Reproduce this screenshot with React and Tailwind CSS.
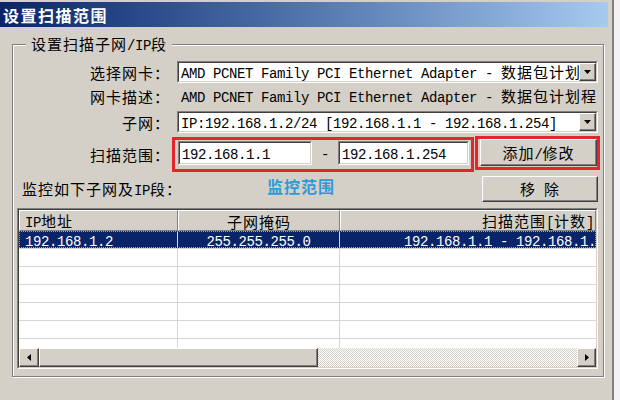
import React from "react";

const LAT = "font-['Liberation_Mono',monospace] text-[14px] tracking-[-0.4px]";
const CJK = "font-['Noto_Sans_CJK_SC',sans-serif] text-[15px] tracking-[1px]";

function T({ s, bold }) {
  const runs = [];
  for (const ch of s) {
    const a = ch.charCodeAt(0) < 128;
    if (runs.length && runs[runs.length - 1].a === a) runs[runs.length - 1].t += ch;
    else runs.push({ a, t: ch });
  }
  return (
    <span className="whitespace-pre leading-none">
      {runs.map((r, i) => (
        <span key={i} className={r.a ? LAT : CJK}>
          {r.t}
        </span>
      ))}
    </span>
  );
}

const RAISED =
  "bg-[#d4d0c8] border border-t-white border-l-white border-r-[#404040] border-b-[#404040] shadow-[inset_-1px_-1px_0_#808080]";

function Sunken({ className, children }) {
  return (
    <div className={"border border-t-[#808080] border-l-[#808080] border-b-white border-r-white " + className}>
      <div className="w-full h-full border border-t-[#404040] border-l-[#404040] border-b-[#d4d0c8] border-r-[#d4d0c8] bg-white flex items-center overflow-hidden">
        {children}
      </div>
    </div>
  );
}

function DownArrow() {
  return (
    <svg width="7" height="4" viewBox="0 0 7 4">
      <path d="M0 0H7L3.5 4Z" fill="#000" />
    </svg>
  );
}

function Combo({ text }) {
  return (
    <Sunken className="ml-[7px] w-[421px] h-[22px]">
      <div className="flex-1 overflow-hidden whitespace-pre pl-[2px] flex items-center">
        <T s={text} />
      </div>
      <div className={"w-[17px] h-full shrink-0 flex items-center justify-center " + RAISED}>
        <DownArrow />
      </div>
    </Sunken>
  );
}

function Label({ s }) {
  return (
    <div className="w-[157px] h-full flex items-center justify-end shrink-0">
      <T s={s} />
    </div>
  );
}

const rows = [
  { ip: "192.168.1.2", mask: "255.255.255.0", range: "192.168.1.1 - 192.168.1.", sel: true },
  {}, {}, {}, {}, {}, {},
];

export default function App() {
  return (
    <div className="w-[620px] h-[400px] bg-[#f2f2f2] flex text-black overflow-hidden font-['Noto_Sans_CJK_SC',sans-serif]">
      <div className="w-[614px] h-full bg-[#d4d0c8] border-r-2 border-r-[#808080] flex flex-col pt-[2px]">
        <div className="h-[25px] mr-[4px] bg-gradient-to-r from-[#0a246a] to-[#a6caf0] flex items-center pl-[3px] text-white font-bold text-[16px] tracking-[1.5px] leading-none">
          设置扫描范围
        </div>

        <div className="relative ml-[12px] mt-[17px] w-[592px] h-[333px] border border-[#808080] shadow-[inset_1px_1px_0_#ffffff,1px_1px_0_#ffffff] flex flex-col">
          <div className="absolute left-[13px] top-[-11px] px-[5px] bg-[#d4d0c8] h-[20px] flex items-center">
            <T s="设置扫描子网/IP段" />
          </div>

          <div className="mt-[16px] h-[22px] flex">
            <Label s="选择网卡：" />
            <Combo text="AMD PCNET Family PCI Ethernet Adapter - 数据包计划程序微型端口" />
          </div>

          <div className="mt-[2px] h-[22px] flex">
            <Label s="网卡描述：" />
            <div className="ml-[11px] h-full flex items-center overflow-hidden whitespace-pre">
              <T s="AMD PCNET Family PCI Ethernet Adapter - 数据包计划程" />
            </div>
          </div>

          <div className="mt-[4px] h-[22px] flex">
            <Label s="子网：" />
            <Combo text="IP:192.168.1.2/24 [192.168.1.1 - 192.168.1.254]" />
          </div>

          <div className="mt-[3px] h-[36px] flex items-start">
            <Label s="扫描范围：" />
            <div className="ml-[2px] mt-[1px] w-[302px] h-[35px] border-[3px] border-[#e3252e] flex items-start pt-[1px] pl-[3px]">
              <Sunken className="w-[134px] h-[24px]">
                <div className="pl-[2px] flex items-center">
                  <T s="192.168.1.1" />
                </div>
              </Sunken>
              <div className="w-[26px] h-[24px] flex items-center justify-center">
                <T s="-" />
              </div>
              <Sunken className="w-[131px] h-[24px]">
                <div className="pl-[2px] flex items-center">
                  <T s="192.168.1.254" />
                </div>
              </Sunken>
            </div>
            <div className="ml-[1px] w-[125px] h-[34px] border-[3px] border-[#e3252e] pl-[2px]">
              <div className={"w-[117px] h-[27px] flex items-center justify-center " + RAISED}>
                <T s="添加/修改" />
              </div>
            </div>
          </div>

          <div className="mt-[4px] h-[26px] flex items-center">
            <div className="ml-[9px] w-[245px] flex items-center">
              <T s="监控如下子网及IP段：" />
            </div>
            <div className="self-start h-[20px] flex items-center text-[16px] font-bold tracking-[1px] text-[#2d9ad8] leading-none">
              监控范围
            </div>
            <div className={"ml-auto mr-[5px] w-[116px] h-[26px] flex items-center justify-center " + RAISED}>
              <T s="移 除" />
            </div>
          </div>

          <div className="mt-[6px] ml-[4px] w-[581px] h-[161px] border border-t-[#808080] border-l-[#808080] border-b-white border-r-white">
            <div className="w-full h-full border border-t-[#404040] border-l-[#404040] border-b-[#d4d0c8] border-r-[#d4d0c8] bg-white flex flex-col overflow-hidden">
              <div className="h-[21px] flex shrink-0">
                <div className="w-[159px] h-full flex items-center pl-[5px] bg-[#d4d0c8] border border-t-white border-l-white border-r-[#808080] border-b-[#808080]">
                  <T s="IP地址" />
                </div>
                <div className="w-[162px] h-full flex items-center justify-center bg-[#d4d0c8] border border-t-white border-l-white border-r-[#808080] border-b-[#808080]">
                  <T s="子网掩码" />
                </div>
                <div className="flex-1 h-full flex items-center justify-end pr-[1px] bg-[#d4d0c8] border border-t-white border-l-white border-r-[#808080] border-b-[#808080]">
                  <T s="扫描范围[计数]" />
                </div>
              </div>

              <div className="flex-1 overflow-hidden">
                {rows.map((r, i) => (
                  <div
                    key={i}
                    className={
                      "relative h-[18px] flex border-b border-b-[#d6d6d6] " +
                      (r.sel ? "bg-[#0a246a] text-white" : "bg-white")
                    }
                  >
                    <div className="w-[159px] h-full flex items-center pl-[6px] border-r border-r-[#d6d6d6]">
                      {r.ip && <T s={r.ip} />}
                    </div>
                    <div className="w-[162px] h-full flex items-center justify-center border-r border-r-[#d6d6d6]">
                      {r.mask && <T s={r.mask} />}
                    </div>
                    <div className="flex-1 h-full flex items-center justify-end overflow-hidden whitespace-pre">
                      {r.range && <T s={r.range} />}
                    </div>
                    {r.sel && (
                      <div className="absolute inset-0 border border-dotted border-[#9aa4d0]" />
                    )}
                  </div>
                ))}
              </div>

              <div className="h-[19px] flex shrink-0">
                <div className={"w-[20px] h-full flex items-center justify-center " + RAISED}>
                  <svg width="4" height="7" viewBox="0 0 4 7">
                    <path d="M4 0V7L0 3.5Z" fill="#000" />
                  </svg>
                </div>
                <div className={"w-[279px] h-full " + RAISED} />
                <div className="flex-1 h-full bg-[repeating-conic-gradient(#ffffff_0%_25%,#d4d0c8_0%_50%)] bg-[length:2px_2px]" />
                <div className={"w-[19px] h-full flex items-center justify-center " + RAISED}>
                  <svg width="4" height="7" viewBox="0 0 4 7">
                    <path d="M0 0V7L4 3.5Z" fill="#000" />
                  </svg>
                </div>
              </div>
            </div>
          </div>
        </div>
      </div>
    </div>
  );
}
